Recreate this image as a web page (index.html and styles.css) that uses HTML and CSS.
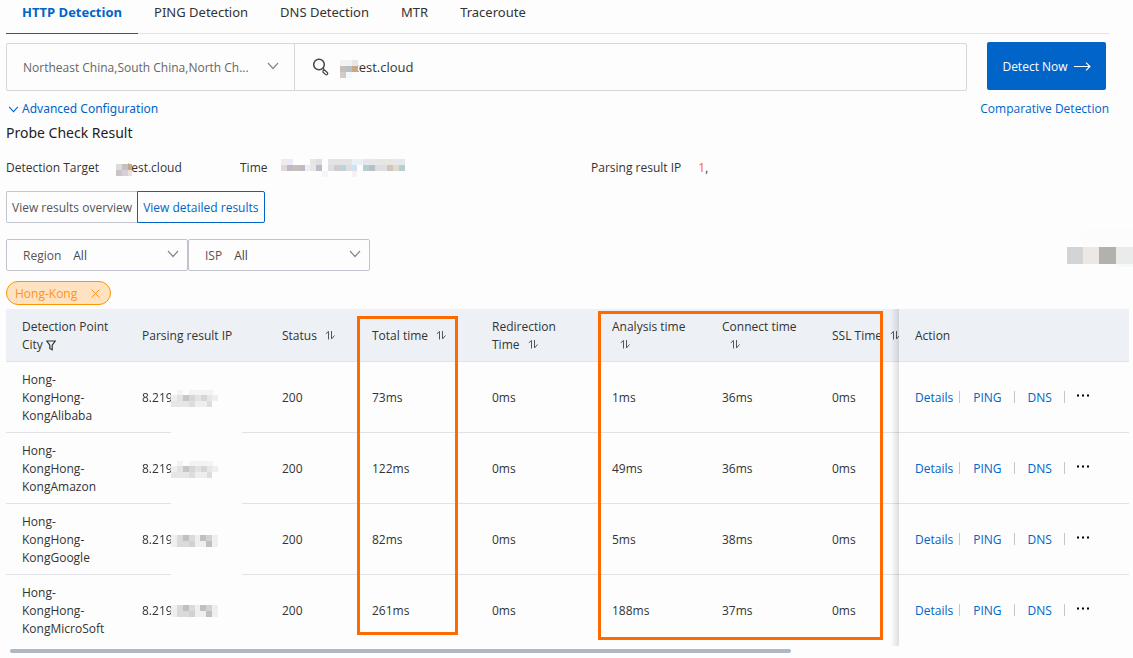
FILE: index.html
```html
<!DOCTYPE html>
<html lang="en">
<head>
<meta charset="utf-8">
<title>HTTP Detection</title>
<link rel="stylesheet" href="styles.css">
</head>
<body>
<svg class="defs" aria-hidden="true">
  <symbol id="chevron" viewBox="0 0 12 8"><path d="M1 1l5 5.500L11 1" fill="none" stroke="currentColor" stroke-width="1.200"/></symbol>
  <symbol id="sort" viewBox="0 0 11 10"><path d="M0.800 3.800L3.500 1.500V9.500M6.500 1V9L9.500 5.500" fill="none" stroke="currentColor"/></symbol>
  <symbol id="filter" viewBox="0 0 10 11"><path d="M0.800 1h8.400L6.200 5.200V9.800L3.800 8.500V5.200z" fill="none" stroke="currentColor" stroke-width="1.200"/></symbol>
  <symbol id="ip-a" viewBox="0 0 47 17">
    <path fill="#f3f3f3" d="M6 0h6v5H6zM18 0h24v5H18z"/><path fill="#efefef" d="M0 5h6v6H0zM41 5h6v6h-6z"/><path fill="#e3e3e3" d="M6 5h6v6H6zM24 5h12v6H24z"/><path fill="#c6c6c6" d="M12 5h6v6h-6z"/><path fill="#d6d6d6" d="M18 5h6v6h-6zM30 5h6v6h-6z"/><path fill="#e6e6e6" d="M36 5h5v6h-5zM0 11h18v6H0z"/><path fill="#dddddd" d="M18 11h6v6h-6zM36 11h5v6h-5z"/><path fill="#eeeeee" d="M24 11h12v6H24z"/>
  </symbol>
  <symbol id="ip-b" viewBox="0 0 47 17">
    <path fill="#efefef" d="M0 3h47v12H0z"/><path fill="#dadada" d="M6 3h18v12H6z"/><path fill="#c0c0c0" d="M12 3h6v6h-6zM29 3h6v6h-6zM35 9h6v6h-6z"/><path fill="#d2d2d2" d="M18 9h6v6h-6zM35 3h6v6h-6z"/>
  </symbol>
</svg>
<main class="page">
  <nav class="tabs">
    <a class="tab tab-active" href="#http">HTTP Detection</a>
    <a class="tab" href="#ping">PING Detection</a>
    <a class="tab" href="#dns">DNS Detection</a>
    <a class="tab" href="#mtr">MTR</a>
    <a class="tab" href="#trace">Traceroute</a>
  </nav>

  <form class="search">
    <div class="fields">
      <div class="area">
        <select aria-label="Detection area"><option>Northeast China,South China,North Ch...</option></select>
        <svg class="chevron"><use href="#chevron"/></svg>
      </div>
      <label class="target">
        <svg class="magnifier" viewBox="0 0 18 18" fill="none" stroke="#444"><circle cx="7" cy="6.500" r="5.300" stroke-width="1.500"/><path d="M10.800 10.300l1.700 1.500" stroke-width="1.400"/><rect x="11.500" y="11.800" width="5.500" height="2.600" rx="1.300" transform="rotate(42 12 12.500)" stroke-width="1.200"/></svg>
        <svg class="mask" viewBox="0 0 18 18"><path fill="#f1f2f4" d="M0 0h12v6H0z"/><path fill="#ece4e2" d="M12 0h6v6h-6z"/><path fill="#cbbdb6" d="M0 6h6v6H0z"/><path fill="#b5c0c5" d="M6 6h6v6H6z"/><path fill="#c8a889" d="M12 6h6v6h-6z"/><path fill="#d0cacd" d="M0 12h6v6H0z"/><path fill="#f3f8fd" d="M6 12h6v6H6z"/></svg>
        <input type="text" value="test.cloud" aria-label="Detection target">
      </label>
    </div>
    <button class="detect" type="button">Detect Now
      <svg viewBox="0 0 17 9"><path d="M0 4.500h16M12 0.700l4 3.800-4 3.800" fill="none" stroke="currentColor" stroke-width="1.100"/></svg>
    </button>
  </form>

  <div class="sublinks">
    <a class="advanced" href="#advanced"><svg><use href="#chevron"/></svg>Advanced Configuration</a>
    <a class="compare" href="#compare">Comparative Detection</a>
  </div>

  <h2 class="title">Probe Check Result</h2>

  <div class="facts">
    <div class="fact fact-target"><span>Detection Target</span><span class="masked"><svg class="mask-small" viewBox="0 0 16 12"><path fill="#dcdcdd" d="M0 0h6v6H0z"/><path fill="#c8bfbf" d="M6 0h6v6H6z"/><path fill="#bfac8d" d="M12 0h4v6h-4z"/><path fill="#cbc3c5" d="M0 6h6v6H0z"/><path fill="#d6d0dc" d="M6 6h6v6H6z"/><path fill="#eadfdd" d="M12 6h4v6h-4z"/></svg>test.cloud</span></div>
    <div class="fact fact-time"><span>Time</span><svg class="mask-time" viewBox="0 0 124 18"><path fill="#efebea" d="M0 0h6v6H0z"/><path fill="#ebebf5" d="M6 0h6v6H6z"/><path fill="#e8e6e2" d="M29 0h6v6h-6zM29 6h6v6h-6zM94 0h18v6H94z"/><path fill="#dbe1e1" d="M35 0h6v6h-6z"/><path fill="#e2e3e2" d="M47 0h24v6H47z"/><path fill="#e9f1f6" d="M71 0h6v6h-6zM77 0h5v6h-5zM24 6h5v6h-5z"/><path fill="#e6e7ea" d="M82 0h12v6H82zM112 0h12v6h-12z"/><path fill="#ddd8d9" d="M0 6h6v6H0z"/><path fill="#bebbc7" d="M6 6h6v6H6zM18 6h6v6h-6zM35 6h6v6h-6z"/><path fill="#c6c0b8" d="M12 6h6v6h-6z"/><path fill="#dcdedf" d="M47 6h6v6h-6zM65 6h6v6h-6zM94 6h12v6H94z"/><path fill="#d3cbcc" d="M53 6h6v6h-6z"/><path fill="#bfd2da" d="M59 6h6v6h-6z"/><path fill="#cfe1f3" d="M71 6h5v6h-5z"/><path fill="#b5cfd1" d="M82 6h6v6h-6zM118 6h6v6h-6z"/><path fill="#b7bfc8" d="M88 6h6v6h-6z"/><path fill="#d0c5ba" d="M106 6h6v6h-6z"/><path fill="#dddcd0" d="M112 6h6v6h-6z"/><path fill="#f2f6f9" d="M41 12h6v6h-6z"/><path fill="#faf0ee" d="M71 12h5v6h-5z"/></svg></div>
    <div class="fact fact-ip"><span>Parsing result IP</span><span><b>1</b>,</span></div>
  </div>

  <div class="views">
    <button type="button" class="view">View results overview</button><button type="button" class="view view-active">View detailed results</button>
  </div>

  <div class="filters">
    <div class="filter"><label for="region">Region</label><select id="region"><option>All</option></select><svg class="chevron"><use href="#chevron"/></svg></div>
    <div class="filter"><label for="isp">ISP</label><select id="isp"><option>All</option></select><svg class="chevron"><use href="#chevron"/></svg></div>
    <svg class="mask-edge" viewBox="0 0 66 38"><path fill="#fcfcfc" d="M14 0h52v18H14z"/><path fill="#d1d5d7" d="M0 18h16v17H0z"/><path fill="#ece8e6" d="M16 18h16v17H16z"/><path fill="#b2b1ad" d="M32 18h17v17H32z"/><path fill="#e9ebed" d="M49 18h17v17H49z"/><path fill="#f7f9f8" d="M49 35h17v3H49z"/></svg>
  </div>

  <div class="tags">
    <span class="tag">Hong-Kong<button type="button" aria-label="Remove Hong-Kong"><svg viewBox="0 0 9 9"><path d="M0.500 0.500l8 8M8.500 0.500l-8 8" stroke="currentColor" fill="none"/></svg></button></span>
  </div>

  <section class="results">
    <div class="scroller">
      <table>
        <colgroup><col class="c120"><col class="c140"><col class="c90"><col class="c120"><col class="c120"><col class="c110"><col class="c110"><col class="c110"><col><col class="c230"></colgroup>
        <thead>
          <tr>
            <th>Detection Point City <svg class="funnel"><use href="#filter"/></svg></th>
            <th>Parsing result IP</th>
            <th>Status<svg class="sort"><use href="#sort"/></svg></th>
            <th>Total time<svg class="sort"><use href="#sort"/></svg></th>
            <th>Redirection Time<svg class="sort"><use href="#sort"/></svg></th>
            <th>Analysis time <svg class="sort"><use href="#sort"/></svg></th>
            <th>Connect time <svg class="sort"><use href="#sort"/></svg></th>
            <th class="nowrap">SSL Time<svg class="sort"><use href="#sort"/></svg></th>
            <th></th>
            <th class="fixed">Action</th>
          </tr>
        </thead>
        <tbody>
          <tr>
            <td>Hong-KongHong-KongAlibaba</td>
            <td class="ip">8.219<span class="cover"><svg><use href="#ip-a"/></svg></span></td>
            <td>200</td><td>73ms</td><td>0ms</td><td>1ms</td><td>36ms</td><td>0ms</td><td></td>
            <td class="fixed"><div class="actions"><a href="#d">Details</a><i></i><a href="#p">PING</a><i></i><a href="#n">DNS</a><i></i><button type="button" aria-label="More"><svg viewBox="0 0 13 3"><path d="M0 0.500h2v2H0zM5 0.500h2v2H5zM10 0.500h2v2h-2z"/></svg></button></div></td>
          </tr>
          <tr>
            <td>Hong-KongHong-KongAmazon</td>
            <td class="ip">8.219<span class="cover"><svg><use href="#ip-a"/></svg></span></td>
            <td>200</td><td>122ms</td><td>0ms</td><td>49ms</td><td>36ms</td><td>0ms</td><td></td>
            <td class="fixed"><div class="actions"><a href="#d">Details</a><i></i><a href="#p">PING</a><i></i><a href="#n">DNS</a><i></i><button type="button" aria-label="More"><svg viewBox="0 0 13 3"><path d="M0 0.500h2v2H0zM5 0.500h2v2H5zM10 0.500h2v2h-2z"/></svg></button></div></td>
          </tr>
          <tr>
            <td>Hong-KongHong-KongGoogle</td>
            <td class="ip">8.219<span class="cover"><svg><use href="#ip-b"/></svg></span></td>
            <td>200</td><td>82ms</td><td>0ms</td><td>5ms</td><td>38ms</td><td>0ms</td><td></td>
            <td class="fixed"><div class="actions"><a href="#d">Details</a><i></i><a href="#p">PING</a><i></i><a href="#n">DNS</a><i></i><button type="button" aria-label="More"><svg viewBox="0 0 13 3"><path d="M0 0.500h2v2H0zM5 0.500h2v2H5zM10 0.500h2v2h-2z"/></svg></button></div></td>
          </tr>
          <tr>
            <td>Hong-KongHong-KongMicroSoft</td>
            <td class="ip">8.219<span class="cover"><svg><use href="#ip-b"/></svg></span></td>
            <td>200</td><td>261ms</td><td>0ms</td><td>188ms</td><td>37ms</td><td>0ms</td><td></td>
            <td class="fixed"><div class="actions"><a href="#d">Details</a><i></i><a href="#p">PING</a><i></i><a href="#n">DNS</a><i></i><button type="button" aria-label="More"><svg viewBox="0 0 13 3"><path d="M0 0.500h2v2H0zM5 0.500h2v2H5zM10 0.500h2v2h-2z"/></svg></button></div></td>
          </tr>
        </tbody>
      </table>
    </div>
    <div class="track"><div class="thumb"></div></div>
    <div class="mark mark-total"></div>
    <div class="mark mark-phases"></div>
  </section>
</main>
</body>
</html>
```
FILE: styles.css
```css
* { box-sizing: border-box; }

body {
  margin: 0;
  background: #fdfdfd;
  color: #333;
  font: 12px/18px "Open Sans", "Noto Sans", sans-serif;
  overflow: hidden;
}

a { color: #0064c8; text-decoration: none; }
button, input, select { font: inherit; color: inherit; }
svg { flex: none; }
.defs { position: absolute; width: 0; height: 0; }
.page { padding: 0 4px 0 6px; }

.tabs {
  display: flex;
  height: 34px;
  margin-right: 20px;
  border-bottom: 1px solid #e3e3e3;
}
.tab {
  height: 34px;
  padding: 3px 16px 0;
  color: #333;
  font-size: 13px;
  font-family: "Noto Sans", "Open Sans", sans-serif;
}
.tab-active {
  border-bottom: 1px solid #0064c8;
  color: #0064c8;
  font-family: "Open Sans", "Noto Sans", sans-serif;
  font-weight: 700;
}

.search {
  display: flex;
  align-items: flex-start;
  gap: 20px;
  margin: 8px 23px 0 0;
}
.fields {
  display: flex;
  flex: 1;
  height: 48px;
  margin-top: 1px;
  border: 1px solid #d6d6d6;
  border-radius: 2px;
}
.area { position: relative; width: 288px; border-right: 1px solid #d6d6d6; }
select {
  appearance: none;
  border: 0;
  background: transparent;
  outline: 0;
}
.area select {
  width: 100%;
  height: 100%;
  padding: 2px 32px 0 16px;
  color: #666;
}
.chevron {
  position: absolute;
  top: 50%;
  right: 15px;
  width: 12px;
  height: 8px;
  margin-top: -5px;
  color: #888;
  pointer-events: none;
}
.target { display: flex; flex: 1; align-items: center; padding-left: 17px; }
.magnifier { width: 18px; height: 18px; }
.mask { position: relative; width: 18px; height: 18px; margin: 4px -4px 0 10px; }
.target input {
  flex: 1;
  min-width: 0;
  height: 44px;
  padding: 0;
  border: 0;
  outline: 0;
  background: transparent;
  font-size: 13px;
}
.detect {
  display: flex;
  align-items: center;
  justify-content: center;
  gap: 6px;
  width: 119px;
  height: 48px;
  padding-top: 2px;
  border: 0;
  border-radius: 2px;
  background: #0064c8;
  color: #fff;
}
.detect svg { width: 17px; height: 9px; }

.sublinks {
  display: flex;
  justify-content: space-between;
  margin: 9px 20px 0 2px;
}
.advanced {
  display: flex;
  align-items: center;
  gap: 3px;
  font-family: "Noto Sans", "Open Sans", sans-serif;
}
.advanced svg { width: 11px; height: 7px; }

.title {
  margin: 4px 0 0;
  color: #222;
  font: 400 14px/22px "Noto Sans", "Open Sans", sans-serif;
}

.facts { display: grid; grid-template-columns: 234px 351px 1fr; margin-top: 15px; }
.fact { display: flex; gap: 17px; }
.fact-time { gap: 13px; }
.masked { display: flex; }
.mask-small { position: relative; width: 16px; height: 12px; margin: 5px -5px 0 0; }
.mask-time { width: 124px; height: 18px; }
.fact b { color: #ff6a00; font-weight: 400; }

.views { display: flex; margin-top: 14px; }
.view {
  height: 32px;
  padding: 1px 5px 0;
  border: 1px solid #c4c6cf;
  border-right: 0;
  border-radius: 2px 0 0 2px;
  background: transparent;
  color: #555;
}
.view-active { border: 1px solid #0064c8; border-radius: 0 2px 2px 0; color: #0064c8; }

.filters { display: flex; margin: 16px -4px 0 0; height: 32px; }
.filter {
  position: relative;
  display: flex;
  align-items: center;
  gap: 12px;
  width: 182px;
  padding: 2px 0 0 16px;
  border: 1px solid #c0c3cc;
  border-radius: 2px;
  color: #555;
}
.filter select { flex: 1; height: 28px; padding: 0; color: #444; }
.filter .chevron { right: 8px; }
.mask-edge { width: 66px; height: 38px; margin: -10px 0 0 auto; }

.tags { display: flex; margin-top: 10px; }
.tag {
  display: flex;
  align-items: center;
  gap: 14px;
  height: 24px;
  padding: 1px 10px 0 8px;
  border: 1px solid #ff9300;
  border-radius: 12px;
  background: #ffe2c0;
  color: #ff9224;
}
.tag button { display: flex; padding: 0; border: 0; background: none; }
.tag svg { width: 9px; height: 9px; margin-bottom: 1px; }

.results { position: relative; margin-top: 4px; }
.scroller { overflow: hidden; }
table { width: 1600px; table-layout: fixed; border-spacing: 0; }
.c90 { width: 90px; }
.c110 { width: 110px; }
.c120 { width: 120px; }
.c140 { width: 140px; }
.c230 { width: 230px; }
th, td {
  padding: 9px 12px 7px 16px;
  border-bottom: 1px solid #e1e2e5;
  text-align: left;
  font-weight: 400;
}
th { height: 53px; background: #edf1f6; }
td { height: 71px; }
tbody tr:last-child td { border-color: transparent; }
.nowrap { white-space: nowrap; }
.sort { width: 11px; height: 10px; margin-left: 8px; color: #555; }
.funnel { width: 10px; height: 11px; vertical-align: -2px; }

.ip { position: relative; }
.cover {
  position: absolute;
  top: 0;
  bottom: -2px;
  left: 45px;
  display: flex;
  align-items: center;
  width: 71px;
  background: #fdfdfd;
}
tbody tr:last-child .cover { bottom: 0; }
.cover svg { width: 47px; height: 17px; }

.fixed { position: sticky; right: 0; background: #fdfdfd; }
th.fixed { background: #edf1f6; }
.fixed::before {
  content: "";
  position: absolute;
  top: 0;
  bottom: -1px;
  left: -8px;
  width: 8px;
  background: linear-gradient(to right, transparent, rgba(0, 0, 0, 0.12));
}
.actions { display: flex; align-items: center; }
.actions i {
  width: 1px;
  height: 12px;
  margin: 0 13px 2px 12px;
  background: #c4c6cf;
}
.actions i:first-of-type { margin-left: 6px; }
.actions i:last-of-type { margin-right: 12px; }
.actions button { display: flex; padding: 0; margin-bottom: 5px; border: 0; background: none; }
.actions svg { width: 13px; height: 3px; }

.track { margin: 3px 4px 0; height: 4px; }
.thumb { width: 70%; height: 4px; border-radius: 2px; background: #adb8c2; }

.mark { position: absolute; border: 3px solid #ff6a00; pointer-events: none; }
.mark-total { top: 7px; left: 351px; width: 101px; height: 319px; }
.mark-phases { top: 2px; left: 592px; width: 285px; height: 329px; }
```
